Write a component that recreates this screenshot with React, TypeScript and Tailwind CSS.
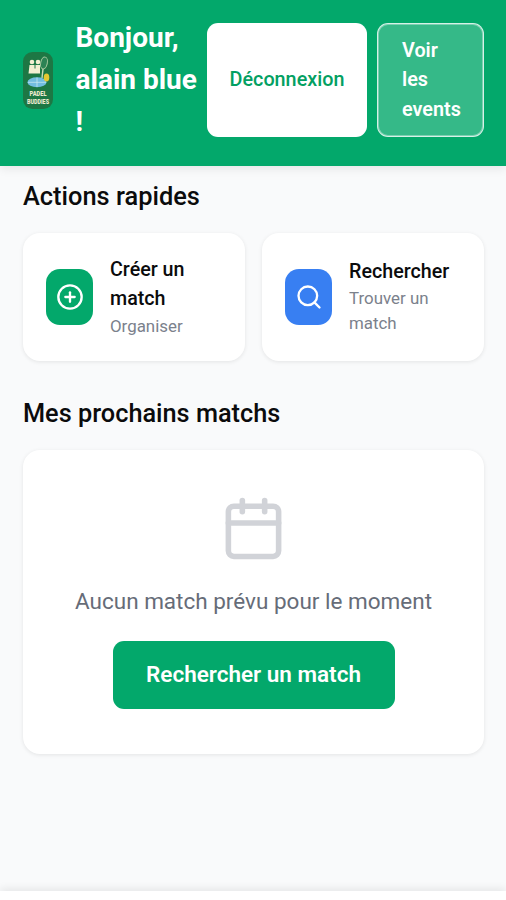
import { Calendar, CirclePlus, Search } from "lucide-react";
import type { ReactNode } from "react";

function Logo() {
  return (
    <svg viewBox="0 0 30 57" className="w-[30px] h-[57px] shrink-0 overflow-visible">
      <rect width="30" height="57" rx="9.5" fill="#1d7744" />
      <g fill="#f3efd2">
        <circle cx="9" cy="10" r="2.3" />
        <circle cx="15" cy="10" r="2.3" />
        <path d="M6.5 13h5v3.5h1V13h4.5v8.5H5.5z" />
      </g>
      <ellipse cx="21" cy="11" rx="3.3" ry="6" fill="#2b8254" stroke="#a9c9a0" strokeWidth="1" transform="rotate(12 21 11)" />
      <path d="M20 17l-1 9" stroke="#c9dcb6" strokeWidth="1.4" />
      <ellipse cx="14" cy="30.3" rx="9.5" ry="5" fill="#72bde0" />
      <path d="M5 30.3h18M14 25.5v9.5" stroke="#c5e6f0" strokeWidth=".8" />
      <ellipse cx="23.5" cy="25.5" rx="2.8" ry="4" fill="#e3c832" />
      <text x="15" y="43.6" textAnchor="middle" textLength="17" lengthAdjust="spacingAndGlyphs" fontSize="7.4" fontWeight="900" fill="#ece9cf">PADEL</text>
      <text x="15" y="52.4" textAnchor="middle" textLength="22" lengthAdjust="spacingAndGlyphs" fontSize="7.4" fontWeight="900" fill="#ece9cf">BUDDIES</text>
    </svg>
  );
}

function ActionCard({ icon, color, title, subtitle }: { icon: ReactNode; color: string; title: string; subtitle: string }) {
  return (
    <button className="flex items-center h-[128px] rounded-[17px] bg-white px-[23px] pb-px text-left shadow-[0_1px_4px_rgba(0,0,0,0.09)]">
      <div className={`flex items-center justify-center w-[47px] h-[56px] shrink-0 rounded-[14px] ${color}`}>{icon}</div>
      <div className="ml-[17px]">
        <div className="text-[19.7px] leading-[29.5px] font-medium text-[#0b0b0c]">{title}</div>
        <div className="text-[16.9px] leading-[25px] text-[#7b818c]">{subtitle}</div>
      </div>
    </button>
  );
}

export default function App() {
  return (
    <div className="flex flex-col h-screen overflow-hidden bg-[#f9fafb] font-['Roboto',sans-serif]">
      <header className="flex items-center h-[166px] shrink-0 px-[23px] pb-[6px] bg-[#03a86b] shadow-[0_3px_9px_rgba(0,0,0,0.08)]">
        <Logo />
        <h1 className="ml-[22.5px] w-[131.5px] shrink-0 text-[28px] leading-[42px] font-bold text-white">
          Bonjour,<br />alain blue<br />!
        </h1>
        <button className="w-[160px] h-[114px] shrink-0 rounded-[11px] bg-white text-[19.8px] font-medium text-[#03a062]">Déconnexion</button>
        <button className="ml-[10px] w-[107px] h-[114px] shrink-0 rounded-[11px] border-[1.5px] border-white/80 bg-white/20 pl-[24px] pr-[16px] text-left text-[19.8px] leading-[29.5px] font-semibold text-white shadow-[inset_0_0_0_1px_rgba(255,255,255,0.35)]">
          Voir<br />les<br />events
        </button>
      </header>

      <main className="flex-1 pl-[23px] pr-[22px] pt-[12px]">
        <h2 className="text-[25.4px] leading-[36px] font-medium text-[#0b0b0c]">Actions rapides</h2>
        <div className="mt-[19px] grid grid-cols-2 gap-[17px]">
          <ActionCard icon={<CirclePlus size={28} className="text-white" />} color="bg-[#03a86b]" title="Créer un match" subtitle="Organiser" />
          <ActionCard icon={<Search size={28} className="text-white" />} color="bg-[#387ff2]" title="Rechercher" subtitle="Trouver un match" />
        </div>

        <h2 className="mt-[35px] text-[25.3px] leading-[36px] font-medium text-[#0b0b0c]">Mes prochains matchs</h2>
        <section className="mt-[18px] flex flex-col items-center h-[304px] rounded-[17px] bg-white pt-[45px] shadow-[0_1px_4px_rgba(0,0,0,0.09)]">
          <Calendar size={67} className="text-[#d1d3d8]" />
          <p className="mt-[22px] text-[22.5px] leading-[34px] text-[#666c78]">Aucun match prévu pour le moment</p>
          <button className="mt-[23px] w-[282px] h-[68px] rounded-[11px] bg-[#03a86b] text-[22.5px] font-semibold text-white">Rechercher un match</button>
        </section>
      </main>

      <nav className="h-[9px] shrink-0 bg-white shadow-[0_-2px_8px_rgba(0,0,0,0.09)]" />
    </div>
  );
}
